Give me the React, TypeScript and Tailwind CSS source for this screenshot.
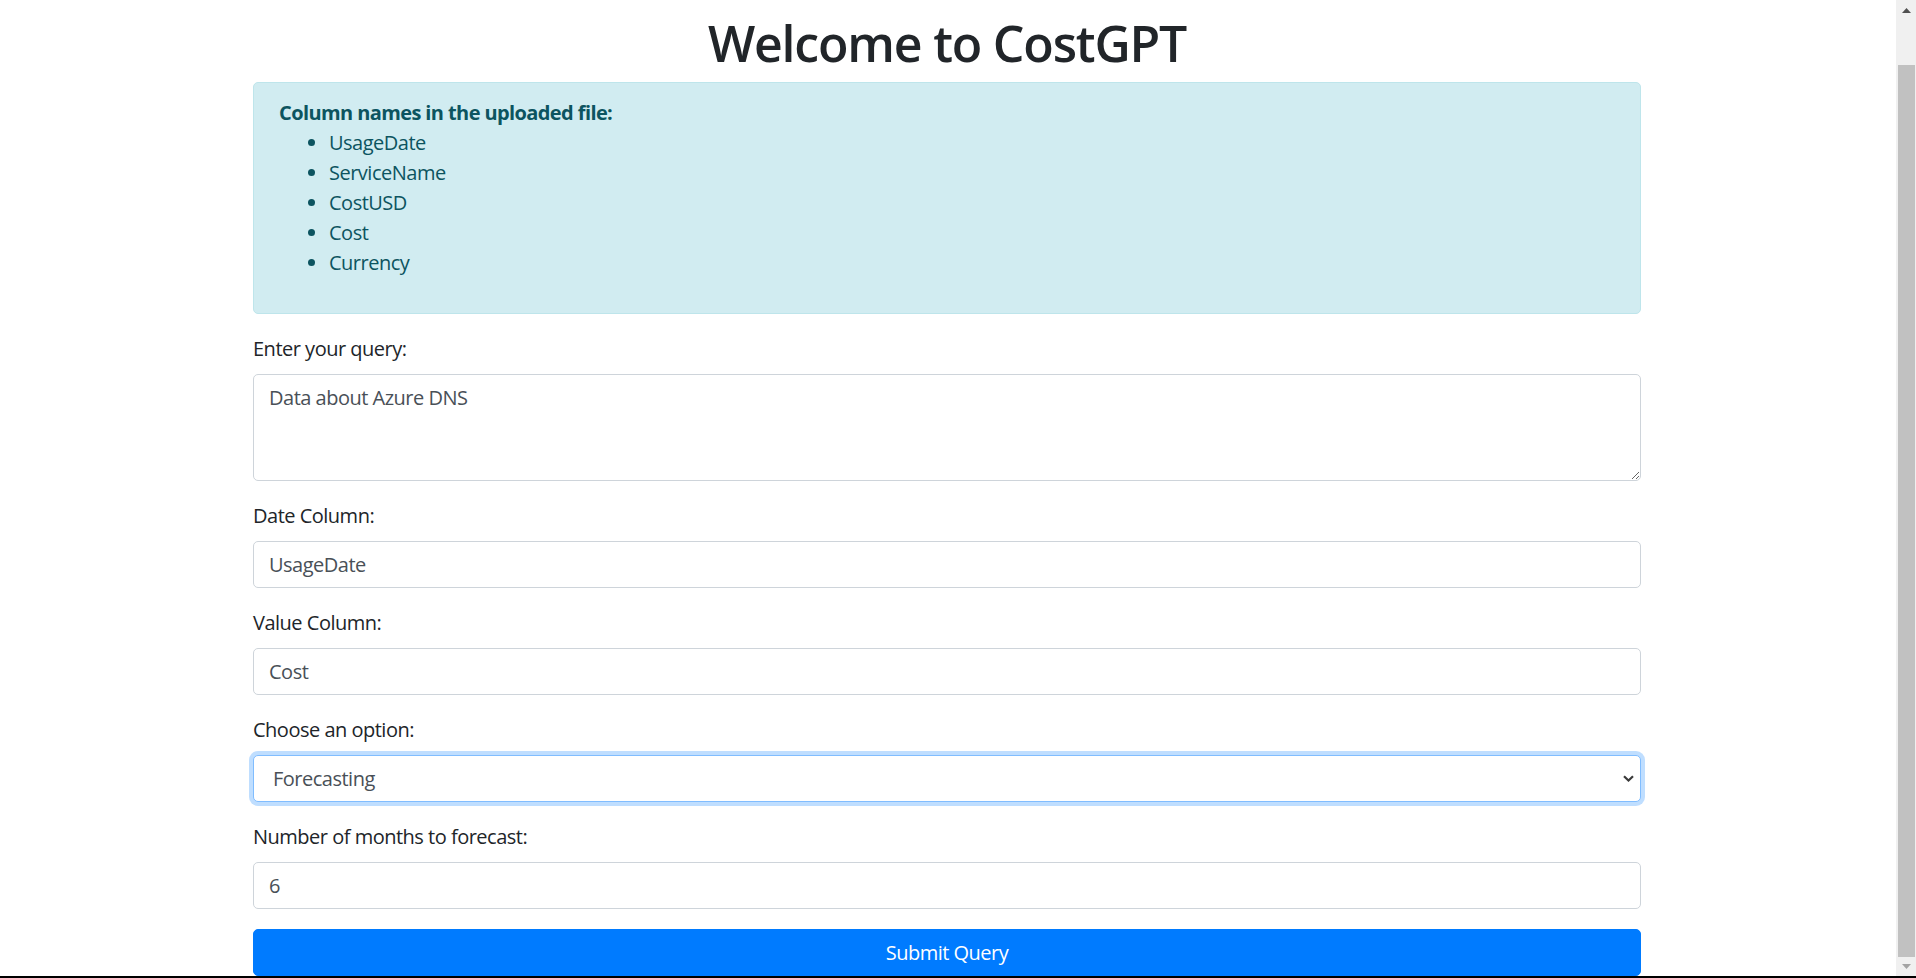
import React from "react";

const columns = ["UsageDate", "ServiceName", "CostUSD", "Cost", "Currency"];

const Scrollbar = () => (
  <div className="flex w-[20px] shrink-0 flex-col bg-[#f0f0f0]">
    <div className="flex h-[20px] items-center justify-center">
      <svg width="9" height="5" viewBox="0 0 9 5">
        <polygon points="0,5 4.5,0 9,5" fill="#505050" />
      </svg>
    </div>
    <div className="h-[45px]" />
    <div className="ml-[2px] mr-[1px] flex-1 bg-[#c1c1c1]" />
    <div className="flex h-[19px] items-center justify-center">
      <svg width="9" height="5" viewBox="0 0 9 5">
        <polygon points="0,0 9,0 4.5,5" fill="#a3a3a3" />
      </svg>
    </div>
  </div>
);

const Field = ({ label, children }: { label: string; children: React.ReactNode }) => (
  <div className="mb-[20px]">
    <label className="mb-[10px] inline-block">{label}</label>
    {children}
  </div>
);

const inputCls =
  "block h-[47px] w-full rounded-[5px] border border-[#ced4da] bg-white px-[15px] py-[7.5px] text-[20px] leading-[30px] tracking-[-0.5px] text-[#495057] outline-none";

export default function App() {
  return (
    <div className="flex h-screen flex-col overflow-hidden bg-white font-['Open_Sans','Noto_Sans',sans-serif] text-[20px] leading-[30px] tracking-[-0.5px] text-[#212529]">
      <div className="flex min-h-0 flex-1">
        <main className="min-w-0 flex-1 overflow-hidden">
          <div className="ml-[253px] w-[1388px] pt-[13px]">
            <h1 className="mb-[9px] text-center text-[50px] font-semibold leading-[60px] tracking-[-1.2px] text-[#212529]">
              Welcome to CostGPT
            </h1>

            {/* columns alert */}
            <div className="mb-[20px] rounded-[5px] border border-[#bee5eb] bg-[#d1ecf1] px-[25px] py-[15px] text-[#0c5460]">
              <strong className="font-bold tracking-[-0.6px]">Column names in the uploaded file:</strong>
              <ul className="mb-[20px] list-disc pl-[50px]">
                {columns.map((c) => (
                  <li key={c}>{c}</li>
                ))}
              </ul>
            </div>

            <form onSubmit={(e) => e.preventDefault()}>
              <Field label="Enter your query:">
                <textarea
                  rows={3}
                  defaultValue="Data about Azure DNS"
                  className="block h-[107px] w-full resize-y rounded-[5px] border border-[#ced4da] bg-white px-[15px] py-[7.5px] text-[20px] leading-[30px] tracking-[-0.5px] text-[#495057] outline-none"
                />
              </Field>

              <Field label="Date Column:">
                <input type="text" defaultValue="UsageDate" className={inputCls} />
              </Field>

              <Field label="Value Column:">
                <input type="text" defaultValue="Cost" className={inputCls} />
              </Field>

              <Field label="Choose an option:">
                <div className="relative">
                  <select
                    defaultValue="forecasting"
                    className="block h-[47px] w-full appearance-none rounded-[5px] border border-[#80bdff] bg-white pl-[19px] pr-[30px] text-[20px] leading-[30px] tracking-[-0.5px] text-[#495057] shadow-[0_0_0_4px_rgba(0,123,255,0.25)] outline-none"
                  >
                    <option value="query">Query</option>
                    <option value="forecasting">Forecasting</option>
                  </select>
                  <svg
                    className="pointer-events-none absolute right-[7px] top-[20px]"
                    width="11"
                    height="7"
                    viewBox="0 0 11 7"
                  >
                    <path d="M1 1.2 L5.5 5.5 L10 1.2" fill="none" stroke="#3a3a3a" strokeWidth="2.2" />
                  </svg>
                </div>
              </Field>

              <Field label="Number of months to forecast:">
                <input type="number" defaultValue={6} className={inputCls + " [appearance:textfield]"} />
              </Field>

              <button
                type="submit"
                className="block h-[47px] w-full rounded-[5px] border border-[#007bff] bg-[#007bff] text-[20px] leading-[30px] tracking-[-0.5px] text-white"
              >
                Submit Query
              </button>
            </form>
          </div>
        </main>
        <Scrollbar />
      </div>
      <div className="h-[2px] shrink-0 bg-black" />
    </div>
  );
}
